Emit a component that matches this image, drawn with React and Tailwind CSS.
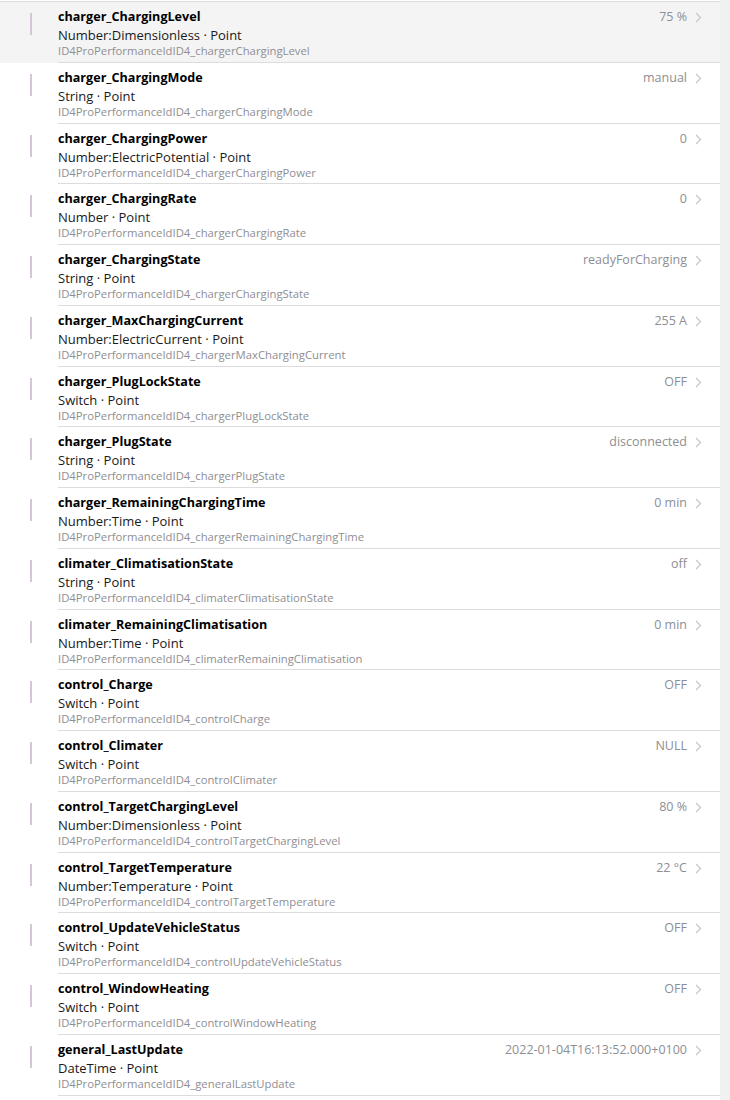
const P = 'ID4ProPerformanceIdID4_';

const items = [
    ['charger_ChargingLevel', 'Number:Dimensionless', 'chargerChargingLevel', '75 %'],
    ['charger_ChargingMode', 'String', 'chargerChargingMode', 'manual'],
    ['charger_ChargingPower', 'Number:ElectricPotential', 'chargerChargingPower', '0'],
    ['charger_ChargingRate', 'Number', 'chargerChargingRate', '0'],
    ['charger_ChargingState', 'String', 'chargerChargingState', 'readyForCharging'],
    ['charger_MaxChargingCurrent', 'Number:ElectricCurrent', 'chargerMaxChargingCurrent', '255 A'],
    ['charger_PlugLockState', 'Switch', 'chargerPlugLockState', 'OFF'],
    ['charger_PlugState', 'String', 'chargerPlugState', 'disconnected'],
    ['charger_RemainingChargingTime', 'Number:Time', 'chargerRemainingChargingTime', '0 min'],
    ['climater_ClimatisationState', 'String', 'climaterClimatisationState', 'off'],
    ['climater_RemainingClimatisation', 'Number:Time', 'climaterRemainingClimatisation', '0 min'],
    ['control_Charge', 'Switch', 'controlCharge', 'OFF'],
    ['control_Climater', 'Switch', 'controlClimater', 'NULL'],
    ['control_TargetChargingLevel', 'Number:Dimensionless', 'controlTargetChargingLevel', '80 %'],
    ['control_TargetTemperature', 'Number:Temperature', 'controlTargetTemperature', '22 °C'],
    ['control_UpdateVehicleStatus', 'Switch', 'controlUpdateVehicleStatus', 'OFF'],
    ['control_WindowHeating', 'Switch', 'controlWindowHeating', 'OFF'],
    ['general_LastUpdate', 'DateTime', 'generalLastUpdate', '2022-01-04T16:13:52.000+0100'],
];

const Chevron = () => (
    <svg width="7" height="11" viewBox="0 0 7 11" className="ml-[8px] mt-[4px] shrink-0">
        <path d="M1 1 L5.5 5.5 L1 10" fill="none" stroke="#c7c7cc" strokeWidth="1.3" />
    </svg>
);

const App = () => {
    return (
        <div className="flex min-h-[1100px] bg-white" style={{ fontFamily: '"Segoe UI", "Open Sans", sans-serif' }}>
            <div className="w-[720px] pt-[1px]">
                <div className="border-t border-[#dcdcdc]">
                    {items.map(([name, type, id, value], i) => (
                        <div key={name} className={`flex h-[60.75px] ${i === 0 ? 'bg-[#f4f4f4]' : ''}`}>
                            <div className="w-[58px] shrink-0 pl-[30px] pt-[11px]">
                                <div className="w-[2px] h-[22px] bg-[#d4c6d6]" />
                            </div>
                            <div className="flex flex-1 border-b border-[#dcdcdc] pr-[18px] pt-[6px] min-w-0">
                                <div className="flex-1 min-w-0">
                                    <div className="text-[12.6px] leading-[18px] font-bold text-black">{name}</div>
                                    <div className="text-[13px] leading-[18px] text-[#1a1a1a]">{type} · Point</div>
                                    <div className="text-[11.3px] leading-[14px] text-[#8e8e93]">{P + id}</div>
                                </div>
                                <div className="flex items-start">
                                    <span className="text-[12.5px] leading-[18px] text-[#8e8e93]">{value}</span>
                                    <Chevron />
                                </div>
                            </div>
                        </div>
                    ))}
                </div>
            </div>
            <div className="w-[10px] bg-[#f1f1f1]" />
        </div>
    );
};

export default App;
